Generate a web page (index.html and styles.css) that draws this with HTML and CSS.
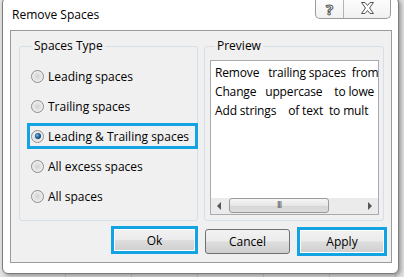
FILE: index.html
```html
<!DOCTYPE html>
<html>
<head>
    <title>Remove Spaces</title>
    <link rel="stylesheet" href="styles.css">
</head>
<body>
    <div class="window">
        <div class="titlebar">
            <span class="title">Remove Spaces</span>
            <div class="caption">
                <span class="cap help">?</span>
                <span class="cap close">
                    <svg width="15" height="12" viewBox="0 0 15 12">
                        <polygon points="1.5,0.5 5,0.5 7.5,3.5 10,0.5 13.5,0.5 9.5,6 13.5,11.5 10,11.5 7.5,8.5 5,11.5 1.5,11.5 5.5,6" fill="#fff" stroke="#555" stroke-width="1"/>
                    </svg>
                </span>
            </div>
        </div>
        <div class="client">
            <div class="groups">
                <fieldset class="group types">
                    <legend>Spaces Type</legend>
                    <label class="opt"><span class="radio"></span>Leading spaces</label>
                    <label class="opt"><span class="radio"></span>Trailing spaces</label>
                    <label class="opt marked"><span class="radio on"></span>Leading &amp; Trailing spaces</label>
                    <label class="opt"><span class="radio"></span>All excess spaces</label>
                    <label class="opt"><span class="radio"></span>All spaces</label>
                </fieldset>
                <fieldset class="group preview">
                    <legend>Preview</legend>
                    <div class="textbox">
                        <div class="lines">
                            <div class="line">Remove   trailing spaces  from</div>
                            <div class="line">Change   uppercase    to lowe</div>
                            <div class="line">Add strings    of text  to mult</div>
                        </div>
                        <div class="hscroll">
                            <span class="arrow left"></span>
                            <div class="track"><span class="thumb">III</span></div>
                            <span class="arrow right"></span>
                        </div>
                    </div>
                </fieldset>
            </div>
            <div class="buttons">
                <button class="btn marked ok">Ok</button>
                <button class="btn cancel">Cancel</button>
                <button class="btn marked apply">Apply</button>
            </div>
        </div>
    </div>
</body>
</html>
```

FILE: styles.css
```css
body {
    margin: 0;
    height: 277px;
    overflow: hidden;
    font-family: "Open Sans", "Noto Sans", sans-serif;
    font-size: 12px;
    color: #000;
    background-color: #e2e2e2;
    background-image: repeating-linear-gradient(90deg, transparent 0, transparent 65px, #c8c8c8 65px, #c8c8c8 66px);
}

.window {
    box-sizing: border-box;
    width: 397px;
    height: 277px;
    margin: -3px 0 0 2px;
    padding: 0 6px 10px 7px;
    background: #fff;
    border: 1px solid #7c7c7c;
    border-radius: 6px;
    box-shadow: 2px 2px 4px rgba(0, 0, 0, 0.35);
    display: flex;
    flex-direction: column;
}

.titlebar {
    height: 32px;
    display: flex;
    justify-content: space-between;
    align-items: flex-start;
}

.title {
    padding: 9px 0 0 2px;
    line-height: 16px;
}

.caption {
    display: flex;
    height: 20px;
    margin-right: 1px;
    border: 1px solid #9a9a9a;
    border-top: none;
    border-radius: 0 0 5px 5px;
    background: linear-gradient(#fdfdfd, #f1f1f1);
}

.cap {
    display: flex;
    align-items: center;
    justify-content: center;
}

.help {
    width: 27px;
    border-right: 1px solid #b4b4b4;
    font-size: 15px;
    font-weight: bold;
    color: #fff;
    -webkit-text-stroke: 1px #555;
    padding-top: 1px;
}

.close {
    width: 46px;
}

.client {
    flex: 1;
    background: #f0f0f0;
    border: 1px solid #9b9b9b;
    padding: 7px 7px 0 8px;
}

.groups {
    display: flex;
    gap: 6px;
}

.group {
    margin: 0;
    min-width: 0;
    border: 1px solid #d5dfe5;
    border-radius: 3px;
    height: 183px;
    box-sizing: border-box;
}

.group legend {
    margin-left: 5px;
    padding: 0 2px;
    line-height: 16px;
}

.types {
    width: 179px;
    padding: 9px 0 0 7px;
}

.opt {
    display: flex;
    align-items: center;
    height: 26px;
    box-sizing: border-box;
    margin-bottom: 4px;
    margin-right: -1px;
    padding-left: 1px;
    border: 3px solid transparent;
    white-space: nowrap;
}

.opt.marked {
    border-color: #12a3e3;
}

.radio {
    box-sizing: border-box;
    width: 13px;
    height: 13px;
    flex: none;
    margin-right: 4px;
    border: 1px solid #8c8c8c;
    border-radius: 50%;
    background: radial-gradient(circle, #d2d2d2 0, #e4e4e4 45%, #fbfbfb 100%);
    display: flex;
    align-items: center;
    justify-content: center;
}

.radio.on::after {
    content: "";
    width: 6px;
    height: 6px;
    border-radius: 50%;
    background: radial-gradient(circle at 40% 40%, #7cc0f0 0, #1d5d96 45%, #08243f 100%);
}

.preview {
    width: 180px;
    padding: 6px 4px 0 5px;
}

.textbox {
    height: 155px;
    box-sizing: border-box;
    background: #fff;
    border: 1px solid #a9abb0;
    display: flex;
    flex-direction: column;
}

.lines {
    flex: 1;
    overflow: hidden;
    padding: 2px 0 0 4px;
    line-height: 19px;
    letter-spacing: -0.15px;
}

.line {
    white-space: pre;
}

.hscroll {
    height: 16px;
    display: flex;
    align-items: center;
    background: #ebebeb;
}

.arrow {
    width: 16px;
    height: 16px;
    display: flex;
    align-items: center;
    justify-content: center;
}

.arrow::after {
    content: "";
    border-top: 4px solid transparent;
    border-bottom: 4px solid transparent;
}

.arrow.left::after {
    border-right: 4px solid #555;
}

.arrow.right::after {
    border-left: 4px solid #555;
}

.track {
    flex: 1;
    height: 16px;
    padding: 0 0 0 2px;
}

.thumb {
    display: flex;
    align-items: center;
    justify-content: center;
    box-sizing: border-box;
    width: 100px;
    height: 15px;
    border: 1px solid #9a9a9a;
    border-radius: 3px;
    background: linear-gradient(#f6f6f6, #e6e6e6 50%, #d6d6d6 51%, #dcdcdc);
    font-size: 8px;
    font-family: "DejaVu Sans", sans-serif;
    letter-spacing: -1px;
    color: #555;
}

.buttons {
    display: flex;
    justify-content: flex-end;
    align-items: flex-start;
    gap: 7px;
    margin: 5px -3px 0 0;
}

.btn {
    box-sizing: border-box;
    font-family: inherit;
    font-size: inherit;
    color: #000;
    padding: 0;
    border: 1px solid #707070;
    border-radius: 3px;
    background: linear-gradient(#f2f2f2 0, #ebebeb 48%, #dddddd 52%, #cfcfcf 100%);
}

.btn.marked {
    border: 3px solid #12a3e3;
    border-radius: 0;
    box-shadow: inset 0 0 0 1px #fff;
}

.ok {
    width: 87px;
    height: 28px;
}

.cancel {
    width: 85px;
    height: 25px;
    margin-top: 3px;
}

.apply {
    width: 90px;
    height: 29px;
    margin-top: 1px;
}
```
